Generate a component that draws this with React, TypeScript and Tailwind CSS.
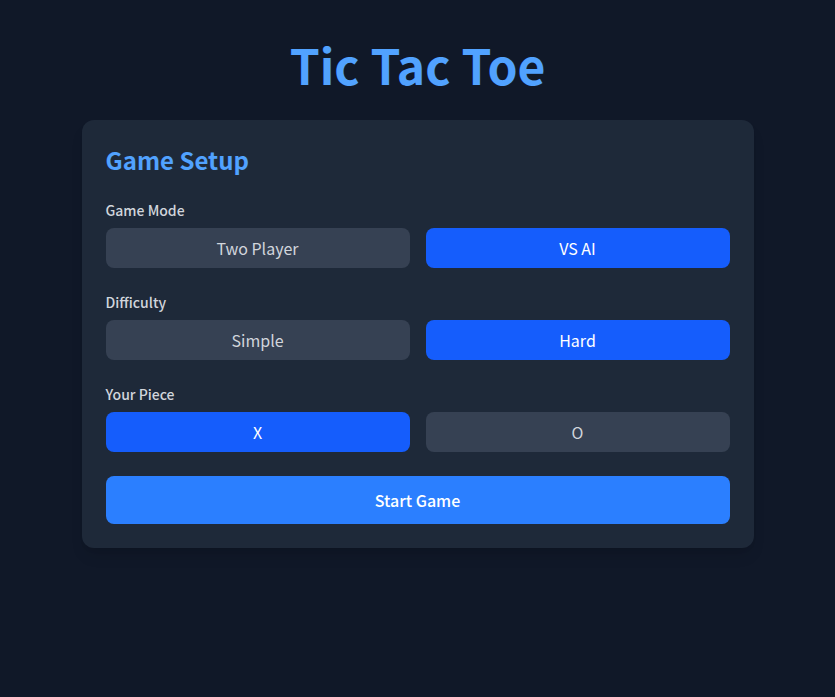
import React, { useState } from "react";

function Option({ label, active, onClick }: { label: string; active: boolean; onClick: () => void }) {
  return (
    <button
      onClick={onClick}
      className={
        active
          ? "h-10 rounded-lg bg-blue-600 text-base text-white"
          : "h-10 rounded-lg bg-gray-700 text-base text-gray-300"
      }
    >
      {label}
    </button>
  );
}

function Group({
  title,
  options,
  value,
  onChange,
}: {
  title: string;
  options: string[];
  value: string;
  onChange: (v: string) => void;
}) {
  return (
    <div className="mb-6">
      <div className="mb-2 text-sm font-medium leading-5 text-gray-300">{title}</div>
      <div className="grid grid-cols-2 gap-4">
        {options.map((o) => (
          <Option key={o} label={o} active={o === value} onClick={() => onChange(o)} />
        ))}
      </div>
    </div>
  );
}

export default function App() {
  const [mode, setMode] = useState("VS AI");
  const [diff, setDiff] = useState("Hard");
  const [piece, setPiece] = useState("X");
  return (
    <div
      className="flex min-h-screen flex-col items-center bg-gray-900 pt-10"
      style={{ fontFamily: '"Noto Sans CJK SC", "Noto Sans", sans-serif' }}
    >
      <h1 className="mb-8 text-center text-5xl font-bold leading-none text-blue-400">Tic Tac Toe</h1>
      <div className="w-full max-w-2xl rounded-xl bg-gray-800 p-6 shadow-lg">
        <h2 className="mb-6 text-2xl font-semibold text-blue-400">Game Setup</h2>
        <Group title="Game Mode" options={["Two Player", "VS AI"]} value={mode} onChange={setMode} />
        <Group title="Difficulty" options={["Simple", "Hard"]} value={diff} onChange={setDiff} />
        <Group title="Your Piece" options={["X", "O"]} value={piece} onChange={setPiece} />
        <button className="h-12 w-full rounded-lg bg-blue-500 text-base font-medium text-white">
          Start Game
        </button>
      </div>
    </div>
  );
}
